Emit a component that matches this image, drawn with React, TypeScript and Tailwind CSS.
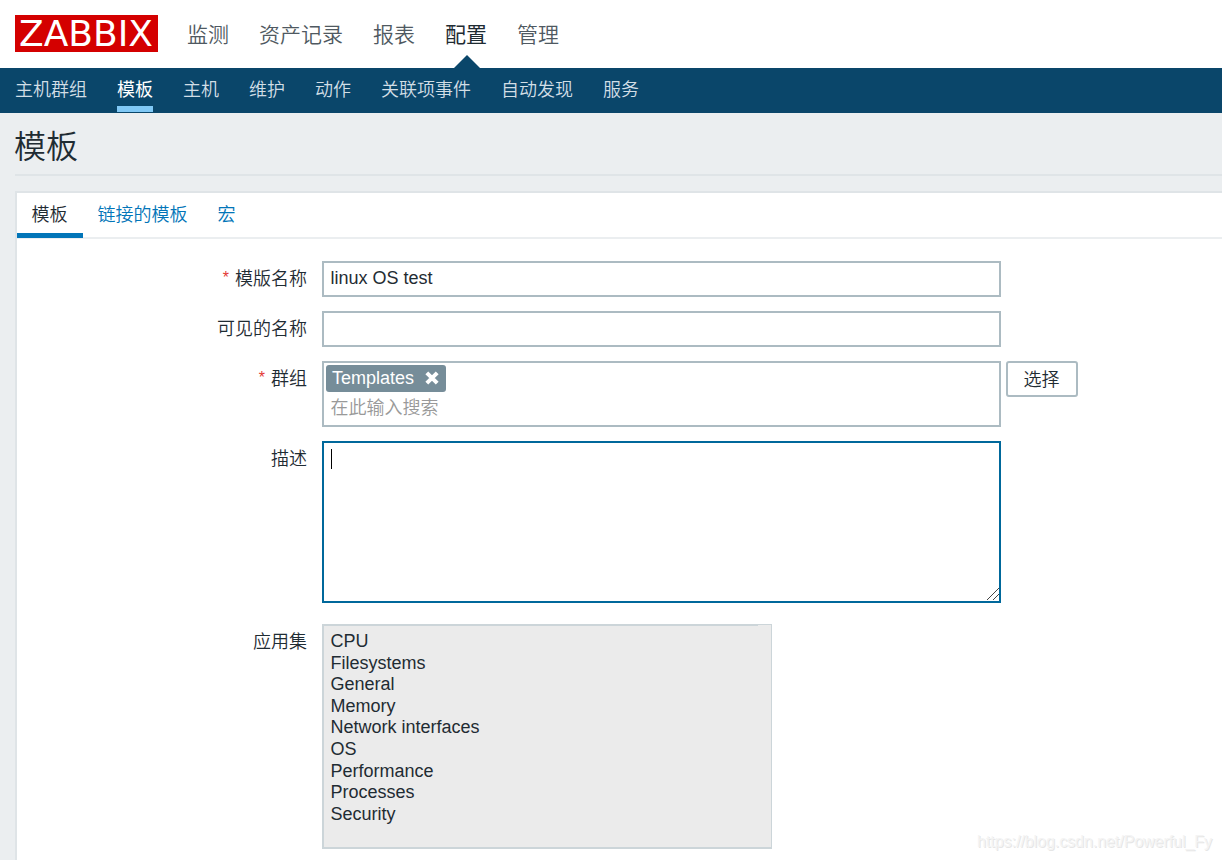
import { ReactNode } from 'react';
import clsx from 'clsx';

const mainMenu = ['监测', '资产记录', '报表', '配置', '管理'];
const subMenu = ['主机群组', '模板', '主机', '维护', '动作', '关联项事件', '自动发现', '服务'];
const tabs = ['模板', '链接的模板', '宏'];
const applications = [
  'CPU',
  'Filesystems',
  'General',
  'Memory',
  'Network interfaces',
  'OS',
  'Performance',
  'Processes',
  'Security',
];

interface FormRowProps {
  label: string;
  required?: boolean;
  className?: string;
  children: ReactNode;
}

function FormRow({ label, required, className, children }: FormRowProps) {
  return (
    <div className={clsx('flex items-start', className)}>
      <label className="mr-[15px] w-[290px] shrink-0 pt-1 text-right leading-[29px]">
        {required && <span className="mr-[6px] align-[2px] text-[16px] leading-none text-[#e33734]">*</span>}
        {label}
      </label>
      {children}
    </div>
  );
}

function Header() {
  return (
    <header>
      <div className="flex h-[68px] items-start bg-white pl-[15px] pt-[15px]">
        <div className="h-[37px] w-[143px] shrink-0 bg-[#d40000] pl-1 font-['DejaVu_Sans'] text-[36px] leading-[37px] font-normal whitespace-nowrap text-white">
          ZABBIX
        </div>
        <nav className="ml-[29px] flex h-[53px] gap-[30px] text-[21px] leading-10 text-[#4f5961]">
          {mainMenu.map((item) => (
            <div key={item} className={clsx('relative', item === '配置' && 'font-normal text-[#1f2c33]')}>
              {item}
              {item === '配置' && (
                <svg className="absolute bottom-0 left-[9px] h-[13px] w-[26px]" viewBox="0 0 26 13">
                  <path d="M0 13 13 0l13 13z" fill="#0a466a" />
                </svg>
              )}
            </div>
          ))}
        </nav>
      </div>
      <nav className="flex h-[45px] gap-[30px] bg-[#0a466a] pl-[15px] leading-11 text-[#d2dee6]">
        {subMenu.map((item) => (
          <div
            key={item}
            className={clsx('h-11', item === '模板' && 'border-b-6 border-[#80c8f5] font-normal text-white')}
          >
            {item}
          </div>
        ))}
      </nav>
    </header>
  );
}

function TemplateForm() {
  return (
    <form className="pt-[22px]">
      <FormRow label="模版名称" required>
        <div className="h-9 w-[679px] border-2 border-[#acbbc2] pl-[6.5px] leading-[30px]">linux OS test</div>
      </FormRow>

      <FormRow label="可见的名称" className="mt-[14px]">
        <div className="h-9 w-[679px] border-2 border-[#acbbc2]" />
      </FormRow>

      <FormRow label="群组" required className="mt-[14px]">
        <div className="h-[66px] w-[679px] border-2 border-[#acbbc2] pt-[2px] pl-[2px]">
          <div className="flex h-[27px] w-[120px] justify-between rounded-[3px] bg-[#768d99] pr-[7px] pl-[6px] leading-[27px] text-white">
            Templates
            <svg className="mt-[6px] h-[14px] w-[14px]" viewBox="0 0 14 14">
              <path d="M1.8 1.8l10.4 10.4M12.2 1.8 1.8 12.2" stroke="currentColor" strokeWidth="4" />
            </svg>
          </div>
          <div className="pl-[4.5px] leading-[32px] text-[#999]">在此输入搜索</div>
        </div>
        <button
          type="button"
          className="ml-[5px] h-9 w-[72px] rounded-[3px] border-2 border-[#acbbc2] pt-px pr-px leading-8 text-[#1f2c33]"
        >
          选择
        </button>
      </FormRow>

      <FormRow label="描述" className="mt-[14px]">
        <div className="flex h-[162px] w-[679px] items-start justify-between border-2 border-[#00689b] pt-[6px] pl-[7px]">
          <span className="h-5 w-px bg-black" />
          <svg className="mb-px h-[12px] w-[12px] self-end" viewBox="0 0 12 12" shapeRendering="crispEdges">
            <path d="M0 12L12 0M6 12l6-6" stroke="#444" fill="none" />
          </svg>
        </div>
      </FormRow>

      <FormRow label="应用集" className="mt-[21px]">
        <ul className="h-[225px] w-[450px] border-t border-r border-b-2 border-l-2 border-[#ccd5d9] bg-[#ebebeb] pl-[6.5px] leading-[21.6px]">
          <li className="mb-[5px] h-px w-[434px] -ml-[6.5px] bg-[#ccd5d9]" />
          {applications.map((name) => (
            <li key={name}>{name}</li>
          ))}
        </ul>
      </FormRow>
    </form>
  );
}

export default function App() {
  return (
    <div className="relative h-[860px] w-[1222px] overflow-hidden bg-[#ebeef0] font-['Liberation_Sans','Noto_Sans_CJK_SC',sans-serif] text-[18px] font-[350] text-[#1f2c33]">
      <Header />
      <main className="pl-[15px]">
        <h1 className="h-[63px] border-b-2 border-[#dfe4e7] pt-[10px] text-[32px] leading-[48px]">
          <span className="-ml-px">模板</span>
        </h1>
        <section className="mt-[15px] h-[700px] border-t-2 border-l-2 border-[#dfe4e7] bg-white">
          <div className="flex h-[46px] border-b-2 border-[#ebeef0] leading-[44px]">
            {tabs.map((tab, i) => (
              <div
                key={tab}
                className={clsx(
                  'h-[45px] pr-[15.5px] pl-[14.5px]',
                  i === 0 ? 'border-b-5 border-[#0275b8]' : 'text-[#0275b8]',
                )}
              >
                {tab}
              </div>
            ))}
          </div>
          <TemplateForm />
        </section>
      </main>
      <div className="absolute right-[10px] bottom-[7px] text-[16px] leading-[22px] tracking-[-0.05px] text-[#f4f4f4] [text-shadow:1px_1px_0_#e6e6e6]">
        https://blog.csdn.net/Powerful_Fy
      </div>
    </div>
  );
}
